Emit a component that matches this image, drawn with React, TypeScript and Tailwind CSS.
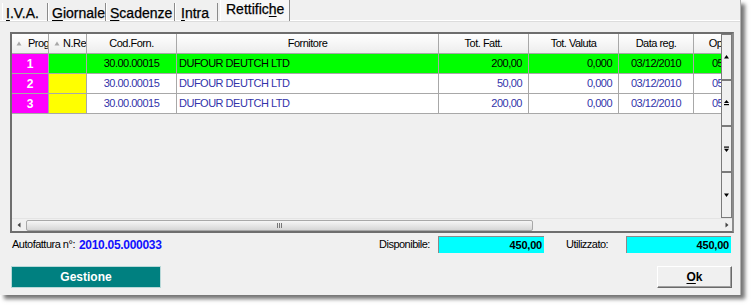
import React from "react";

const rows = [
  { n: "1", nre: "#00ff00", bg: "#00ff00", color: "#000000", fatt: "200,00" },
  { n: "2", nre: "#ffff00", bg: "#ffffff", color: "#3333aa", fatt: "50,00" },
  { n: "3", nre: "#ffff00", bg: "#ffffff", color: "#3333aa", fatt: "200,00" },
];

function SortTri() {
  return (
    <svg width="6" height="5" viewBox="0 0 6 5" className="shrink-0">
      <path d="M3 0.5 L5.5 4.5 L0.5 4.5 Z" fill="#a8a8a8" />
    </svg>
  );
}

function Tab({ children, w, pl, selected }: { children: React.ReactNode; w: number; pl: number; selected?: boolean }) {
  return (
    <div
      style={{ width: w, paddingLeft: pl }}
      className={
        selected
          ? "h-[21px] flex items-start pt-[1px] bg-[#f7f7f7] border-l border-white border-r border-r-[#8a8a8a] text-[14px] text-black leading-[16px] -mb-px relative z-10 [-webkit-text-stroke:0.25px_#000]"
          : "h-[18px] flex items-start pt-[3px] border-l border-white border-r border-r-[#8a8a8a] text-[14px] text-black leading-[14px] mt-[3px] [-webkit-text-stroke:0.25px_#000]"
      }
    >
      {children}
    </div>
  );
}

function VBtn({ kind }: { kind: number }) {
  return (
    <div className="h-[46px] w-full border border-[#7a7a7a] bg-[#f0f0f0] flex items-center justify-center">
      <svg width="7" height="8" viewBox="0 0 7 8">
        {kind === 0 && <path d="M3.5 2 L6 5.5 L1 5.5 Z" fill="#000" />}
        {kind === 1 && (
          <>
            <path d="M3.5 1 L6 4 L1 4 Z" fill="#000" />
            <rect x="1" y="5" width="5" height="1.2" fill="#000" />
          </>
        )}
        {kind === 2 && (
          <>
            <rect x="1" y="1.5" width="5" height="1.2" fill="#000" />
            <path d="M1 3.8 L6 3.8 L3.5 7 Z" fill="#000" />
          </>
        )}
        {kind === 3 && <path d="M1 2.5 L6 2.5 L3.5 6 Z" fill="#000" />}
      </svg>
    </div>
  );
}

export default function App() {
  const cols = "grid grid-cols-[37px_38px_90px_262px_90px_90px_75px_44px]";
  const cell = "h-[20px] border-r border-b border-[#a8a8a8] flex items-center overflow-hidden whitespace-nowrap";
  const hdr = "bg-gradient-to-b from-white to-[#ededed]";
  return (
    <div className="w-[752px] h-[305px] bg-white font-['Liberation_Sans',Arial,sans-serif]">
      <div className="w-[741px] h-[295px] bg-[#f0f0f0] border-r border-[#b0b0b0] shadow-[4px_4px_4px_rgba(0,0,0,0.55)] flex flex-col">
        {/* Tabs */}
        <div className="h-[21px] flex items-start pl-[2px] border-b border-white shadow-[0_1px_0_#dcdcdc]">
          <Tab w={46} pl={3}>
            <span className="underline underline-offset-2">I</span>.V.A.
          </Tab>
          <Tab w={58} pl={3}>
            <span className="underline underline-offset-2">G</span>iornale
          </Tab>
          <Tab w={69} pl={3}>
            <span className="underline underline-offset-2">S</span>cadenze
          </Tab>
          <Tab w={43} pl={5}>
            <span className="underline underline-offset-2">I</span>ntra
          </Tab>
          <div className="w-[2px]" />
          <Tab w={70} pl={5} selected>
            Rettific<span className="underline underline-offset-2">h</span>e
          </Tab>
        </div>

        {/* Grid */}
        <div className="ml-[10px] mt-[11px] w-[724px] h-[201px] border-2 border-t-[#6e6e6e] border-l-[#6e6e6e] border-r-[#8c8c8c] border-b-[#6e6e6e] flex flex-col text-[11px] tracking-[-0.5px]">
          <div className="flex h-[184px]">
            <div className="w-[709px] overflow-hidden bg-[#f0f0f0]">
              {/* header */}
              <div className={cols}>
                <div className={`${cell} ${hdr} pl-[4px] gap-[6px]`}>
                  <SortTri />
                  <span>Prog</span>
                </div>
                <div className={`${cell} ${hdr} pl-[5px] gap-[3px]`}>
                  <SortTri />
                  <span>N.Re</span>
                </div>
                <div className={`${cell} ${hdr} justify-center`}>Cod.Forn.</div>
                <div className={`${cell} ${hdr} justify-center`}>Fornitore</div>
                <div className={`${cell} ${hdr} justify-center`}>Tot. Fatt.</div>
                <div className={`${cell} ${hdr} justify-center`}>Tot. Valuta</div>
                <div className={`${cell} ${hdr} justify-center`}>Data reg.</div>
                <div className={`${cell} ${hdr} justify-center`}>Op</div>
              </div>
              {rows.map((r) => (
                <div key={r.n} className={cols} style={{ color: r.color }}>
                  <div className={`${cell} bg-[#ff00ff] justify-center text-white text-[12px] font-bold tracking-normal`}>{r.n}</div>
                  <div className={cell} style={{ background: r.nre }} />
                  <div className={`${cell} justify-center`} style={{ background: r.bg }}>30.00.00015</div>
                  <div className={`${cell} pl-[2px]`} style={{ background: r.bg }}>DUFOUR DEUTCH LTD</div>
                  <div className={`${cell} justify-end pr-[6px]`} style={{ background: r.bg }}>{r.fatt}</div>
                  <div className={`${cell} justify-end pr-[6px]`} style={{ background: r.bg }}>0,000</div>
                  <div className={`${cell} justify-center`} style={{ background: r.bg }}>03/12/2010</div>
                  <div className={`${cell} pl-[18px]`} style={{ background: r.bg }}>05</div>
                </div>
              ))}
            </div>
            <div className="w-[11px] flex flex-col">
              <VBtn kind={0} />
              <VBtn kind={1} />
              <VBtn kind={2} />
              <VBtn kind={3} />
            </div>
          </div>
          {/* horizontal scrollbar */}
          <div className="h-[13px] flex items-center bg-[#f0f0f0] border-t border-[#e4e4e4]">
            <div className="w-[13px] h-full flex items-center justify-center">
              <svg width="4" height="6" viewBox="0 0 4 6">
                <path d="M3.5 0.5 L0.5 3 L3.5 5.5 Z" fill="#444" />
              </svg>
            </div>
            <div className="ml-[1px] w-[507px] h-[11px] rounded-[2px] border border-[#a8a8a8] bg-gradient-to-b from-[#f6f6f6] to-[#d6d6d6] flex items-center justify-center">
              <div className="flex gap-[1px]">
                <div className="w-px h-[5px] bg-[#777]" />
                <div className="w-px h-[5px] bg-[#777]" />
                <div className="w-px h-[5px] bg-[#777]" />
              </div>
            </div>
            <div className="flex-1" />
            <div className="w-[11px] h-full flex items-center justify-center">
              <svg width="4" height="6" viewBox="0 0 4 6">
                <path d="M0.5 0.5 L3.5 3 L0.5 5.5 Z" fill="#444" />
              </svg>
            </div>
          </div>
        </div>

        {/* Info row */}
        <div className="mt-[3px] h-[17px] flex items-center pl-[12px] text-[11px] tracking-[-0.5px] text-black">
          <div className="w-[67px]">Autofattura n°:</div>
          <div className="w-[300px] text-[12px] font-bold text-[#1010ff] tracking-[-0.3px]">2010.05.000033</div>
          <div className="w-[59px]">Disponibile:</div>
          <div className="w-[106px] h-[17px] bg-[#00ffff] border-t border-l border-[#8a8a8a] flex items-center justify-end pr-[2px] text-[11px] font-bold tracking-[-0.2px]">
            450,00
          </div>
          <div className="w-[22px]" />
          <div className="w-[60px]">Utilizzato:</div>
          <div className="w-[105px] h-[17px] bg-[#00ffff] border-t border-l border-[#8a8a8a] flex items-center justify-end pr-[2px] text-[11px] font-bold tracking-[-0.2px]">
            450,00
          </div>
        </div>

        {/* Buttons */}
        <div className="mt-[13px] flex items-center pl-[11px] pr-[8px]">
          <div className="w-[150px] h-[22px] bg-[#008080] border border-[#b8d8d8] flex items-center justify-center text-white text-[12px] font-bold">
            Gestione
          </div>
          <div className="flex-1" />
          <div className="w-[75px] h-[22px] bg-[#f0f0f0] border border-t-white border-l-white border-r-[#6a6a6a] border-b-[#6a6a6a] shadow-[inset_-1px_-1px_0_#a0a0a0] flex items-center justify-center text-[12px] font-bold text-black">
            <span className="underline underline-offset-2">O</span>k
          </div>
        </div>
      </div>
    </div>
  );
}
